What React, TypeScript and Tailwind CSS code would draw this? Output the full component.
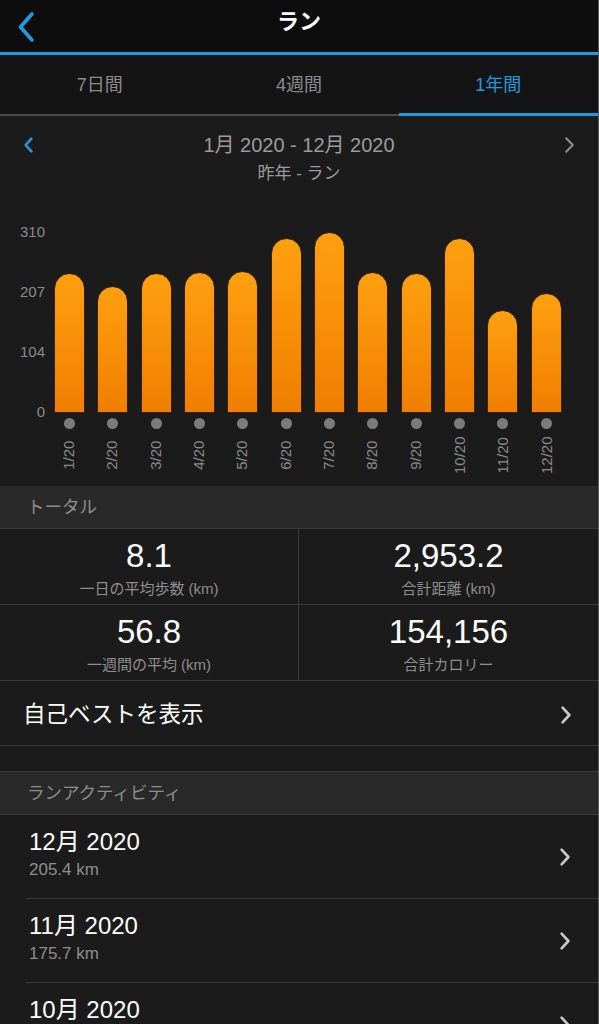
import React from "react";

const bars = [
  { label: "1/20", h: 140 },
  { label: "2/20", h: 127 },
  { label: "3/20", h: 140 },
  { label: "4/20", h: 141 },
  { label: "5/20", h: 142 },
  { label: "6/20", h: 175 },
  { label: "7/20", h: 181 },
  { label: "8/20", h: 141 },
  { label: "9/20", h: 140 },
  { label: "10/20", h: 175 },
  { label: "11/20", h: 103 },
  { label: "12/20", h: 120 },
];

function Chevron({ dir = "right", color = "#c9c9c9", w = 12, h = 20, sw = 2.6 }: { dir?: "left" | "right"; color?: string; w?: number; h?: number; sw?: number }) {
  const d = dir === "right" ? `M${sw} ${sw} L${w - sw} ${h / 2} L${sw} ${h - sw}` : `M${w - sw} ${sw} L${sw} ${h / 2} L${w - sw} ${h - sw}`;
  return (
    <svg width={w} height={h} viewBox={`0 0 ${w} ${h}`} fill="none">
      <path d={d} stroke={color} strokeWidth={sw} strokeLinecap="round" strokeLinejoin="round" />
    </svg>
  );
}

function Stat({ value, label, right }: { value: string; label: string; right?: boolean }) {
  return (
    <div className={`h-[76px] flex flex-col items-center pt-[8px] border-b border-[#3a3a3a] ${right ? "" : "border-r"}`}>
      <div className="text-[33px] leading-[38px] text-white">{value}</div>
      <div className="text-[15px] leading-[18px] mt-[5px] text-[#8e8e8e]">{label}</div>
    </div>
  );
}

function Activity({ title, sub, divider = true }: { title: string; sub: string; divider?: boolean }) {
  return (
    <div>
      <div className="h-[83px] flex items-center pl-[29px] pr-[26px]">
        <div className="flex-1 pb-[5px]">
          <div className="text-[24px] leading-[28px] text-white">{title}</div>
          <div className="text-[17px] leading-[20px] mt-[4px] text-[#8e8e8e]">{sub}</div>
        </div>
        <div className="pr-[1px]">
          <Chevron />
        </div>
      </div>
      {divider && <div className="ml-[26px] h-px bg-[#3a3a3a]" />}
    </div>
  );
}

export default function App() {
  return (
    <div
      className="w-[599px] h-[1024px] overflow-hidden bg-[#1b1b1b] border-r border-[#5a5a5a] text-white"
      style={{ fontFamily: '"Liberation Sans", "Noto Sans CJK JP", sans-serif' }}
    >
      {/* Header */}
      <div className="h-[52px] bg-[#0d0d0d] grid grid-cols-[60px_1fr_60px] items-center">
        <div className="pl-[17px] pt-[1px]">
          <svg width="18" height="32" viewBox="0 0 18 32" fill="none">
            <path d="M15 3 L3.5 16 L15 29" stroke="#1e9be0" strokeWidth="3.6" strokeLinecap="round" strokeLinejoin="round" />
          </svg>
        </div>
        <div className="text-center text-[22px] font-bold leading-[26px] -mt-[8px]">ラン</div>
        <div />
      </div>
      <div className="h-[3px] bg-[#1e9be0]" />

      {/* Tabs */}
      <div className="h-[61px] bg-[#141414] flex">
        <div className="flex-1 flex items-center justify-center border-b-[2px] border-[#4a4a4a] text-[18px] text-[#8c8c8c] pt-[1px]">7日間</div>
        <div className="flex-1 flex items-center justify-center border-b-[2px] border-[#4a4a4a] text-[18px] text-[#8c8c8c] pt-[1px]">4週間</div>
        <div className="flex-1 flex items-center justify-center border-b-[3px] border-[#1e9be0] text-[18px] text-[#1e9be0] pt-[2px]">1年間</div>
      </div>

      {/* Date nav */}
      <div className="pt-[16px] relative">
        <div className="flex items-center px-[23px]">
          <Chevron dir="left" color="#1e9be0" w={11} h={18} sw={2.6} />
          <div className="flex-1 text-center text-[20px] leading-[26px] text-[#9c9c9c]">1月 2020 - 12月 2020</div>
          <Chevron dir="right" color="#8a8a8a" w={11} h={18} sw={2.2} />
        </div>
        <div className="text-center text-[17px] leading-[22px] mt-[5px] text-[#9c9c9c]">昨年 - ラン</div>
      </div>

      {/* Chart */}
      <div className="mt-[39px] flex h-[262px]">
        <div className="w-[48px] h-[196px] flex flex-col justify-between items-end pr-[3px] text-[15px] leading-[16px] text-[#8a8a8a]">
          <span>310</span>
          <span>207</span>
          <span>104</span>
          <span>0</span>
        </div>
        <div className="flex-1 mr-[30px] flex">
          {bars.map((b) => (
            <div key={b.label} className="flex-1 flex flex-col items-center">
              <div className="h-[189px] flex items-end">
                <div
                  className="w-[31px] rounded-t-full border border-[#3a1f00] bg-gradient-to-b from-[#ffa010] to-[#f07e00]"
                  style={{ height: b.h }}
                />
              </div>
              <div className="mt-[5px] w-[11px] h-[11px] rounded-full bg-[#7b7b7b]" />
              <div className="h-[52px] flex items-center justify-center">
                <span className="-rotate-90 whitespace-nowrap text-[15px] text-[#8a8a8a]">{b.label}</span>
              </div>
            </div>
          ))}
        </div>
      </div>

      {/* Total */}
      <div className="h-[43px] bg-[#292929] border-b border-[#3a3a3a] flex items-center pl-[27px] text-[17.5px] text-[#8e8e8e]">トータル</div>
      <div className="grid grid-cols-2">
        <Stat value="8.1" label="一日の平均歩数 (km)" />
        <Stat value="2,953.2" label="合計距離 (km)" right />
        <Stat value="56.8" label="一週間の平均 (km)" />
        <Stat value="154,156" label="合計カロリー" right />
      </div>

      <div className="h-[65px] flex items-center pl-[23px] pr-[26px] pt-[3px] border-b border-[#3a3a3a]">
        <div className="flex-1 text-[22.5px] text-white">自己ベストを表示</div>
        <Chevron />
      </div>

      <div className="h-[25px]" />

      <div className="h-[44px] bg-[#292929] border-y border-[#3a3a3a] flex items-center pl-[27px] text-[17.5px] text-[#8e8e8e]">ランアクティビティ</div>

      <Activity title="12月 2020" sub="205.4 km" />
      <Activity title="11月 2020" sub="175.7 km" />
      <Activity title="10月 2020" sub="160.1 km" divider={false} />
    </div>
  );
}
